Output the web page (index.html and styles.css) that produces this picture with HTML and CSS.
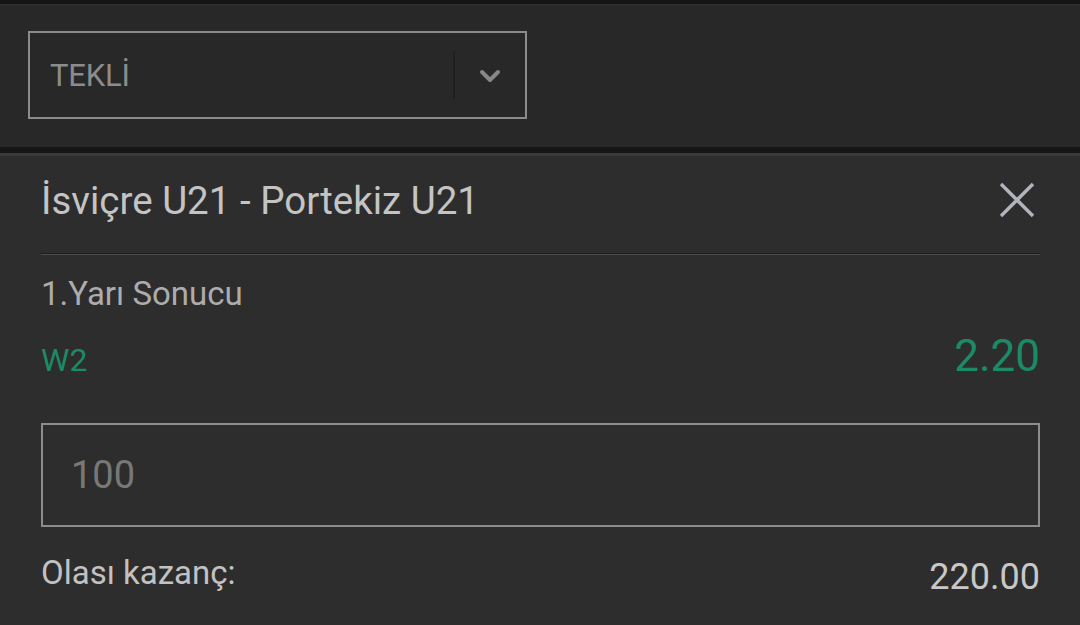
FILE: index.html
```html
<!DOCTYPE html>
<html lang="tr">
<head>
  <meta charset="UTF-8" />
  <title>Bahis Kuponu</title>
  <link rel="stylesheet" href="styles.css">
</head>
<body>
  <div class="topbar">
    <div class="select">
      <span class="select-label">TEKLİ</span>
      <span class="select-divider"></span>
      <span class="select-arrow">
        <svg width="22" height="14" viewBox="0 0 22 14">
          <path d="M3 3 L11 11 L19 3" fill="none" stroke="#878787" stroke-width="4" stroke-linecap="round" stroke-linejoin="round"/>
        </svg>
      </span>
    </div>
  </div>

  <div class="bet">
    <div class="bet-head">
      <h1 class="match">İsviçre U21 - Portekiz U21</h1>
      <button class="close" aria-label="Kapat">
        <svg width="36" height="36" viewBox="0 0 36 36">
          <path d="M2 2 L34 34 M34 2 L2 34" stroke="#b1b4bc" stroke-width="3.4"/>
        </svg>
      </button>
    </div>

    <div class="market">1.Yarı Sonucu</div>
    <div class="pick">
      <span class="pick-name">W2</span>
      <span class="odds">2.20</span>
    </div>

    <input class="stake" type="text" placeholder="100" />

    <div class="payout">
      <span>Olası kazanç:</span>
      <span class="payout-value">220.00</span>
    </div>
  </div>
</body>
</html>
```

FILE: styles.css
```css
* {
  box-sizing: border-box;
}

body {
  margin: 0;
  background-color: #2d2d2d;
  font-family: Roboto, "Noto Sans", sans-serif;
  color: #b0b0b0;
}

.topbar {
  height: 156px;
  padding: 27px 0 0 28px;
  background-color: #282828;
  border-top: 4px solid #141414;
  box-shadow: inset 0 1px 0 #333333;
  border-bottom: 3px solid #3a3a3a;
  position: relative;
}

.topbar::after {
  content: "";
  position: absolute;
  left: 0;
  right: 0;
  bottom: 0;
  height: 6px;
  background-color: #151515;
}

.select {
  display: flex;
  align-items: center;
  width: 499px;
  height: 88px;
  border: 2px solid #8b8b8b;
}

.select-label {
  flex: 1;
  padding-left: 20px;
  font-size: 31px;
  color: #8c8c8c;
  letter-spacing: -0.2px;
}

.select-divider {
  width: 2px;
  height: 48px;
  background-color: #1f1f1f;
}

.select-arrow {
  width: 70px;
  display: flex;
  justify-content: center;
  padding-top: 2px;
}

.bet {
  padding: 0 40px 0 41px;
}

.bet-head {
  display: flex;
  align-items: center;
  justify-content: space-between;
  height: 99px;
  padding-bottom: 10px;
  border-bottom: 1px solid #4d4d4d;
  box-shadow: 0 -1px 0 #1c1c1c inset;
}

.match {
  margin: 0;
  font-size: 38.5px;
  font-weight: 400;
  color: #c4c4c4;
}

.close {
  background: none;
  border: none;
  padding: 0;
  margin-right: 5px;
  display: flex;
  cursor: pointer;
}

.market {
  margin-top: 19px;
  font-size: 33px;
  color: #acacac;
}

.pick {
  display: flex;
  justify-content: space-between;
  align-items: baseline;
  margin-top: 17px;
  color: #1c8a64;
}

.pick-name {
  font-size: 32px;
}

.odds {
  font-size: 44px;
}

.stake {
  display: block;
  width: 100%;
  height: 104px;
  margin-top: 41px;
  padding: 0 28px;
  background: transparent;
  border: 2px solid #8c8c8c;
  border-radius: 0;
  font-family: Roboto, sans-serif;
  font-size: 38px;
  color: #c0c0c0;
  outline: none;
}

.stake::placeholder {
  color: #787878;
}

.payout {
  display: flex;
  justify-content: space-between;
  margin-top: 26px;
  font-size: 33px;
  color: #c2c2c2;
}

.payout-value {
  font-size: 36px;
  color: #c8c8c8;
  margin-top: 3px;
}
```
